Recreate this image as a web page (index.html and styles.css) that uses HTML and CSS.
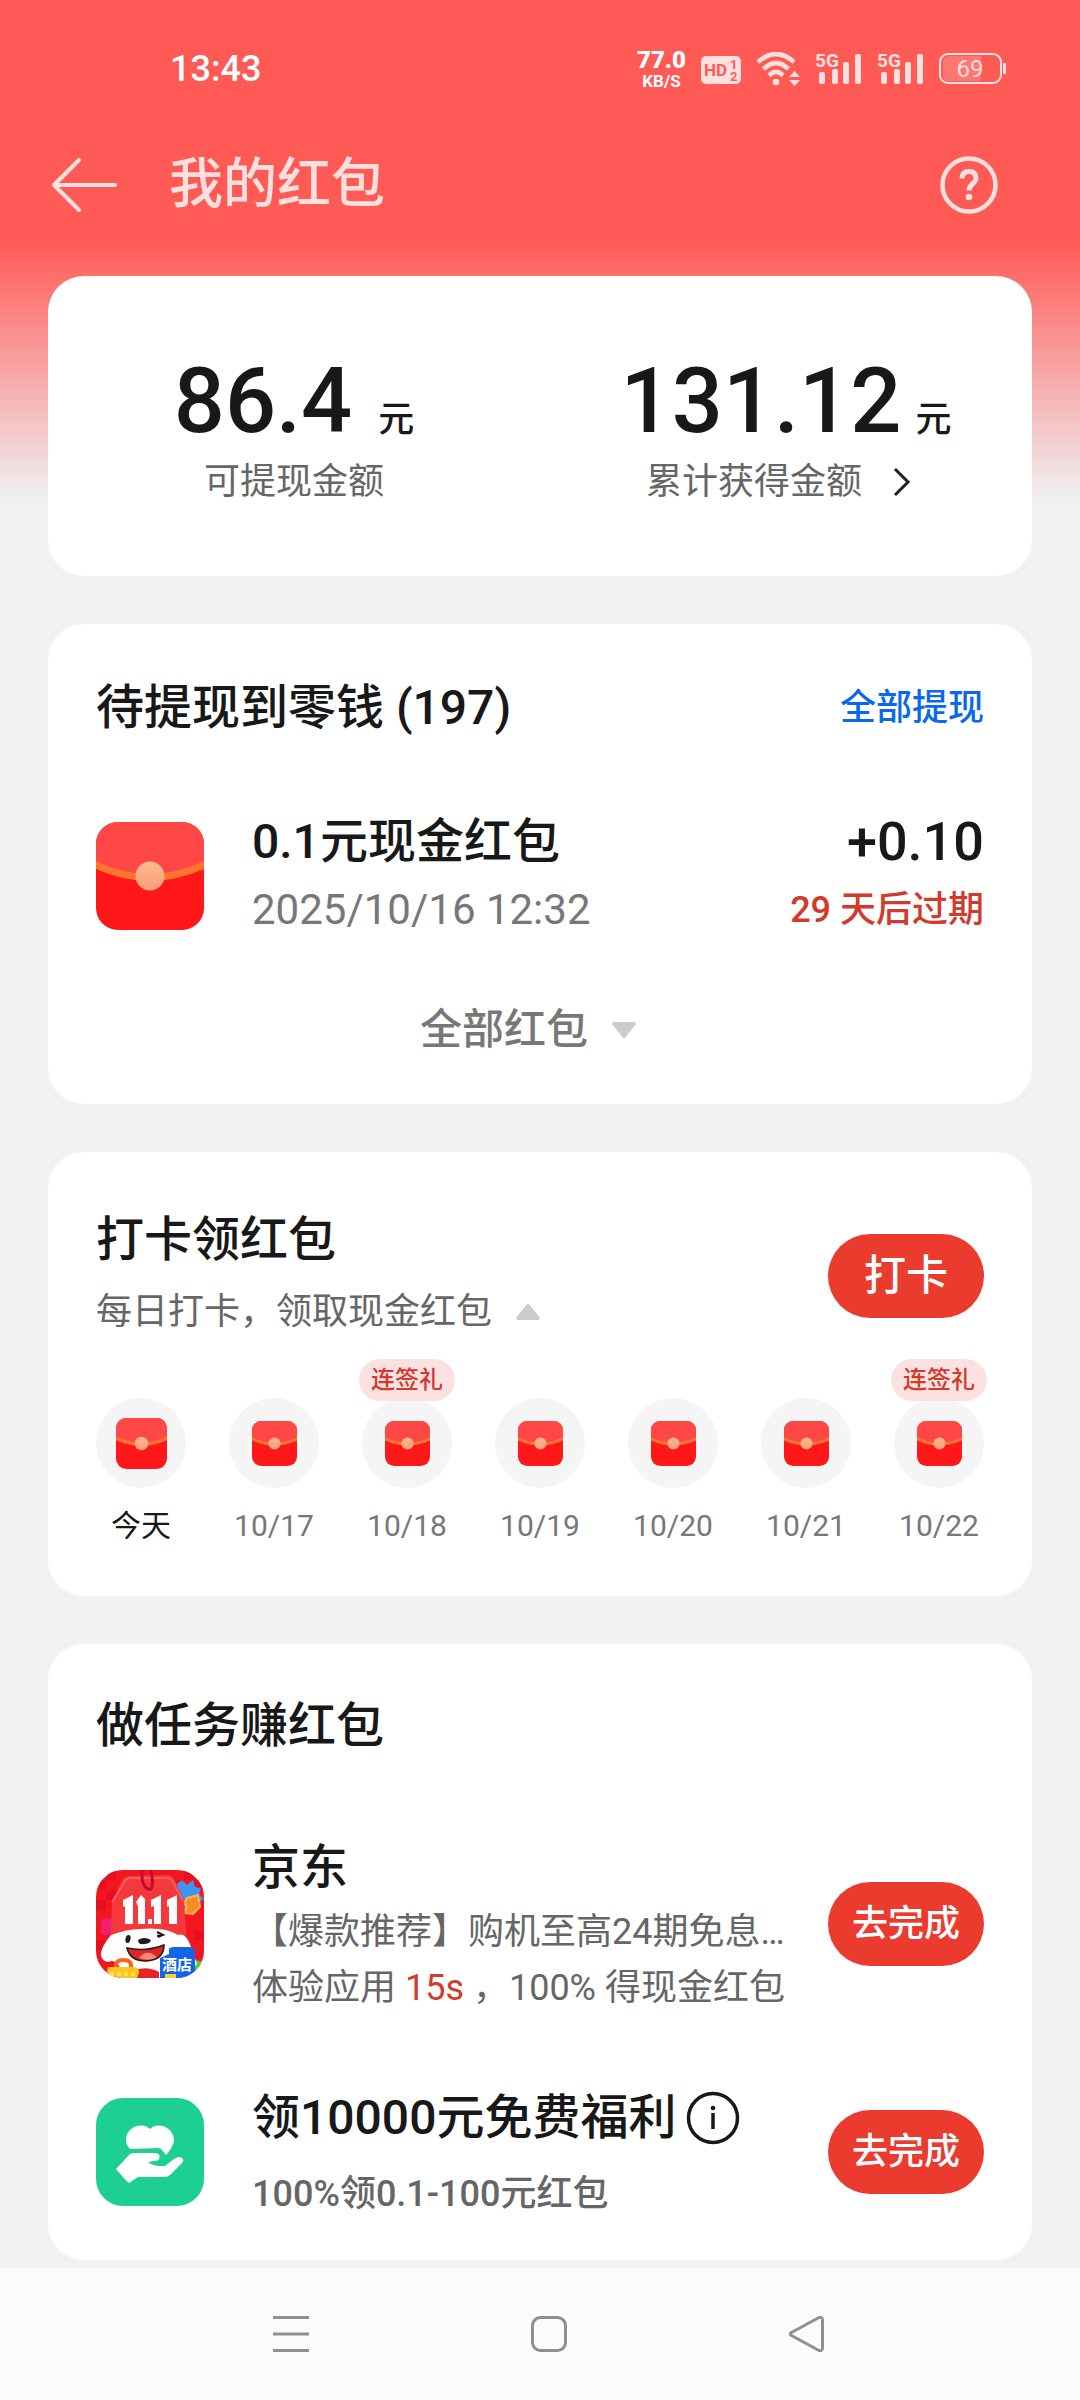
FILE: index.html
```html
<!DOCTYPE html>
<html lang="zh-CN">
<head>
<meta charset="utf-8">
<meta name="viewport" content="width=device-width, initial-scale=1">
<title>我的红包</title>
<link rel="stylesheet" href="styles.css">
</head>
<body>
<svg class="defs" width="0" height="0" aria-hidden="true">
  <defs>
    <clipPath id="tile"><rect width="108" height="108" rx="27"/></clipPath>
    <clipPath id="packetClip"><rect width="108" height="108" rx="22"/></clipPath>
    <linearGradient id="seal" x1="0" y1="0" x2="0" y2="1"><stop offset="0" stop-color="#ffb98c"/><stop offset="1" stop-color="#f89d7c"/></linearGradient>
    <symbol id="packet" viewBox="0 0 108 108">
      <g clip-path="url(#packetClip)">
        <rect width="108" height="108" fill="#ff171a"/>
        <path d="M0 0H108V47Q54 71 0 47Z" fill="#ff7530"/>
        <path d="M0 0H108V39Q54 65 0 39Z" fill="#ff4846"/>
        <circle cx="54" cy="54" r="14.5" fill="url(#seal)"/>
      </g>
    </symbol>
    <symbol id="signal" viewBox="0 0 47 34">
      <text x="0" y="15" font-size="19" font-weight="700">5G</text>
      <rect x="4" y="20" width="6" height="12" rx="2"/>
      <rect x="17" y="17" width="6" height="15" rx="2"/>
      <rect x="28" y="10" width="6" height="22" rx="2"/>
      <rect x="40" y="2" width="6" height="30" rx="2"/>
    </symbol>
  </defs>
</svg>
<div class="page">
  <div class="status">
    <time class="clock">13:43</time>
    <div class="indicators">
      <div class="speed"><b>77.0</b><span>KB/S</span></div>
      <svg width="40" height="34" viewBox="0 0 40 34">
        <rect y="4" width="40" height="28" rx="5"/>
        <g class="cut" font-weight="700"><text x="3" y="24" font-size="17">HD</text>
        <text x="29" y="17" font-size="13">1</text><text x="29" y="29" font-size="13">2</text></g>
      </svg>
      <svg width="44" height="34" viewBox="0 0 44 34">
        <g fill="none" stroke="#ffe0dd" stroke-width="4.6">
          <path d="M2 10Q20 -6 38 10"/><path d="M7.500 17Q20 5 32.500 17"/><path d="M13 23.500Q20 16.500 27 23.500"/>
        </g>
        <circle cx="20" cy="30" r="3.300"/>
        <path d="M38.500 19l5.500 6H33zM38.500 34l-5.500-6h11z"/>
      </svg>
      <svg width="47" height="34"><use href="#signal"/></svg>
      <svg width="47" height="34"><use href="#signal"/></svg>
      <svg width="67" height="34" viewBox="0 0 67 34">
        <path d="M10 4H42V29H10Q4 29 4 23V10Q4 4 10 4Z" fill="#ff7672"/>
        <rect x="1" y="2" width="61" height="29" rx="8" fill="none" stroke="#ffe0dd" stroke-width="2"/>
        <rect x="64" y="11" width="3" height="11" rx="1"/>
        <text x="31" y="25" font-size="24" text-anchor="middle">69</text>
      </svg>
    </div>
  </div>
  <header class="bar">
    <button class="icon-button" aria-label="返回">
      <svg width="66" height="54" viewBox="0 0 66 54" fill="none" stroke="#ffe0dd" stroke-width="4"><path d="M27 2L2 27L27 52M2 27H63" stroke-linecap="round" stroke-linejoin="round"/></svg>
    </button>
    <h1>我的红包</h1>
    <button class="icon-button" aria-label="帮助">
      <svg width="58" height="58" viewBox="0 0 58 58" fill="none" stroke="#ffe0dd"><circle cx="29" cy="29" r="26.500" stroke-width="4.500"/><path d="M22 22.500Q22 15.500 29 15.500T36 22.500C36 27 29 28 29 34.500" stroke-width="5"/><circle cx="29" cy="41" r="3.300" fill="#ffe0dd" stroke="none"/></svg>
    </button>
  </header>

  <main>
    <section class="card summary">
      <div class="stat">
        <p class="amount"><strong>86.4</strong><span>元</span></p>
        <p class="note">可提现金额</p>
      </div>
      <a class="stat stat-total" href="#total">
        <p class="amount"><strong>131.12</strong><span>元</span></p>
        <p class="note">累计获得金额<svg width="48" height="48" viewBox="0 0 48 48" fill="none" stroke="#222" stroke-width="3"><path d="M17 11L30 24L17 37"/></svg></p>
      </a>
    </section>

    <section class="card pending">
      <div class="head"><h2>待提现到零钱 (197)</h2><a class="link" href="#withdraw">全部提现</a></div>
      <div class="entry">
        <svg width="108" height="108"><use href="#packet"/></svg>
        <div class="info"><h3>0.1元现金红包</h3><time class="date">2025/10/16 12:32</time></div>
        <div class="gain"><strong>+0.10</strong><span>29 天后过期</span></div>
      </div>
      <button class="more">全部红包<svg width="48" height="48" viewBox="0 0 48 48" fill="#ccc"><path d="M13 16H35L36 18L25 32H23L12 18Z"/></svg></button>
    </section>

    <section class="card checkin">
      <div class="head">
        <div><h2>打卡领红包</h2><p class="note">每日打卡，领取现金红包<svg width="48" height="48" viewBox="0 0 48 48" fill="#ccc"><path d="M13 32H35L36 30L25 16H23L12 30Z"/></svg></p></div>
        <button class="pill pill-large">打卡</button>
      </div>
      <ol class="days">
        <li class="today"><div class="dot"><svg width="51" height="51"><use href="#packet"/></svg></div><span>今天</span></li>
        <li><div class="dot"><svg width="45" height="45"><use href="#packet"/></svg></div><span>10/17</span></li>
        <li><div class="dot"><svg width="45" height="45"><use href="#packet"/></svg><em>连签礼</em></div><span>10/18</span></li>
        <li><div class="dot"><svg width="45" height="45"><use href="#packet"/></svg></div><span>10/19</span></li>
        <li><div class="dot"><svg width="45" height="45"><use href="#packet"/></svg></div><span>10/20</span></li>
        <li><div class="dot"><svg width="45" height="45"><use href="#packet"/></svg></div><span>10/21</span></li>
        <li><div class="dot"><svg width="45" height="45"><use href="#packet"/></svg><em>连签礼</em></div><span>10/22</span></li>
      </ol>
    </section>

    <section class="card tasks">
      <h2>做任务赚红包</h2>
      <div class="task">
        <svg width="108" height="108" viewBox="0 0 108 108">
          <g clip-path="url(#tile)">
            <rect width="108" height="108" fill="#f4161f"/>
            <path d="M0 10H10V20H0ZM10 0H20V10H10ZM10 20H20V30H10ZM0 30H10V40H0ZM88 0H98V10H88ZM78 10H88V20H78ZM98 10H108V20H98ZM0 70H10V80H0ZM98 60H108V70H98Z" fill="#e60f20"/>
            <path d="M100 90Q104 92 108 90V108H96Z" fill="#55c936"/>
            <path d="M86 10l5 5 6-5 2 7 6 1-2 6 5 5-6 4-1 7-8-1-8 3-6-8-4-9 5-4 1-7z" fill="#3d95f3"/>
            <path d="M91 28l11-3 2 12-7 7-9-1 3-7-3-2z" fill="#ff8b22" stroke="#ffb255" stroke-width="2"/>
            <path d="M5 53Q6 47 12 48L19 47V64L8 65Q2 63 6 59Z" fill="#f0206d"/>
            <path d="M27 9Q29 6 33 6L72 5Q76 5 78 9L88 30L91 78L15 67L16 32Z" fill="#f5383c"/>
            <path d="M16 32L29 11Q31 8 35 8H70Q75 8 77 12L87 31" fill="none" stroke="#ff6a67" stroke-width="1.500"/>
            <path d="M46 0Q45 16 52 19T55 0" fill="none" stroke="#c90636" stroke-width="3"/>
            <g fill="#fff"><path d="M27 30L37 25V54H29V36L27 37ZM40 32L45 25L49 29V54H42V36ZM52 49H56V54H52ZM55 30L65 25V54H58V36L55 37ZM71 30L81 25V54H73V36L71 37Z"/></g>
            <path d="M15 65Q31 59 45 59Q69 57 82 65Q90 62 95 77L101 94Q97 99 90 94L84 89L83 108H25L24 98Q22 92 16 91Q8 94 5 86Q4 78 15 65Z" fill="#fff"/>
            <ellipse cx="32" cy="69" rx="2.500" ry="4" fill="#26191a" transform="rotate(12 32 69)"/>
            <path d="M42 70Q48 66 55 70Q54 74 48 74Q42 75 42 70Z" fill="#26191a"/>
            <path d="M61 62L67 65L62 67M67 65L61 66" fill="none" stroke="#26191a" stroke-width="2"/>
            <path d="M31 78Q49 82 68 75Q68 90 50 91Q34 91 31 78Z" fill="#df2428" stroke="#26191a" stroke-width="1.500"/>
            <path d="M43 88Q51 78 61 87Q53 92 43 88Z" fill="#ff8770"/>
            <path d="M36 101Q50 95 63 102V108H36Z" fill="#e92325"/>
            <path d="M20 98Q19 90 27 90Q36 90 35 97" fill="none" stroke="#ff621f" stroke-width="4"/>
            <path d="M12 97H38Q43 97 43 103L41 108H13L11 101Z" fill="#ffc623"/>
            <path d="M14 104H40" stroke="#ffdf59" stroke-width="4" stroke-dasharray="4 3"/>
            <path d="M73 79Q74 77 78 77H94Q99 78 99 82V108H64V88L73 84Z" fill="#1264e8"/>
            <text x="66" y="100" font-size="15" font-weight="700" fill="#fff">酒店</text>
            <rect x="69" y="104" width="11" height="4" fill="#ffcc39"/>
          </g>
        </svg>
        <div class="info"><h3>京东</h3><p class="note clip">【爆款推荐】购机至高24期免息…</p><p class="note">体验应用 <b>15s</b> ，100% 得现金红包</p></div>
        <button class="pill">去完成</button>
      </div>
      <div class="task task-bonus">
        <svg width="108" height="108" viewBox="0 0 108 108">
          <rect width="108" height="108" rx="27" fill="#1dd092"/>
          <path d="M34 51Q30 47 30 41C31 28 47 24 54 31C61 24 76 28 78 41Q78 48 70 57L66 52Q65 50 61 50Z" fill="#fff"/>
          <path d="M20 71L34 56Q36 55 39 55H60Q65 56 63 61Q62 63 58 63L52 64Q57 68 64 68H69L78 61Q84 57 87 61Q88 63 86 65L74 77Q72 79 68 79H42L33 85Q31 84 20 71Z" fill="#fff"/>
        </svg>
        <div class="info">
          <h3>领10000元免费福利<svg width="54" height="54" viewBox="0 0 54 54" fill="none" stroke="#181818"><circle cx="27" cy="27" r="24.500" stroke-width="3.500"/><path d="M27 22V38" stroke-width="3.500"/><circle cx="27" cy="17" r="2.300" fill="#181818" stroke="none"/></svg></h3>
          <p class="note">100%领0.1-100元红包</p>
        </div>
        <button class="pill">去完成</button>
      </div>
    </section>
  </main>

  <nav class="system">
    <button aria-label="最近任务"><svg width="36" height="36" viewBox="0 0 36 36"><path d="M0 1.500H36M0 18H36M0 34.500H36"/></svg></button>
    <button aria-label="主屏幕"><svg width="36" height="36" viewBox="0 0 36 36"><rect x="1.500" y="1.500" width="33" height="33" rx="8"/></svg></button>
    <button aria-label="后退"><svg width="36" height="36" viewBox="0 0 36 36"><path d="M2.500 16.500L29 2Q33.500 0 33.500 4V32Q33.500 36 29 34L2.500 19.500Q0 18 2.500 16.500Z"/></svg></button>
  </nav>
</div>
</body>
</html>
```
FILE: styles.css
```css
* { box-sizing: border-box; margin: 0; padding: 0; }

body {
  background: #f0f1f3;
  color: #181818;
  font-family: Roboto, "Noto Sans CJK SC", sans-serif;
}

svg { display: block; flex: none; }
.defs { position: absolute; }
a { color: inherit; text-decoration: none; }
button { border: 0; background: none; color: inherit; font: inherit; cursor: pointer; }

.page {
  display: flex;
  flex-direction: column;
  min-height: 100vh;
  background: linear-gradient(#ff5a56 240px, #f0f1f3 500px);
}

.status {
  display: flex;
  justify-content: space-between;
  align-items: center;
  height: 138px;
  padding: 0 74px 0 170px;
  color: #fff;
}
.clock { font-size: 36px; font-weight: 500; }
.indicators { display: flex; align-items: center; gap: 15px; fill: #ffe0dd; }
.speed { display: flex; flex-direction: column; align-items: center; font-weight: 700; }
.speed b { font-size: 24px; line-height: 24px; }
.speed span { font-size: 17px; line-height: 18px; }
.cut { fill: #ff5a56; }

.bar { display: flex; align-items: center; height: 94px; padding: 0 82px 0 52px; color: #ffe0dd; }
.bar h1 { flex: 1; margin-left: 51px; font-size: 54px; font-weight: 500; line-height: 72px; }

main { display: flex; flex-direction: column; gap: 48px; padding: 44px 48px 8px; }

.card { padding: 0 48px; border-radius: 36px; background: #fff; }
h2, h3 { font-size: 48px; font-weight: 500; }
h2 { line-height: 72px; }
.note { font-size: 36px; line-height: 48px; color: #666; }

.summary { display: grid; grid-template-columns: 1fr 1fr; padding: 78px 0 70px; }
.stat { display: flex; flex-direction: column; align-items: center; gap: 8px; }
.amount { display: flex; align-items: baseline; gap: 26px; font-weight: 500; }
.amount strong { font-size: 90px; line-height: 96px; font-weight: 500; }
.amount span { font-size: 36px; line-height: 48px; }
.stat-total .amount { gap: 14px; }
.stat-total .note { display: flex; align-items: center; gap: 16px; }

.head { display: flex; justify-content: space-between; align-items: center; }
.link { font-size: 36px; font-weight: 500; line-height: 48px; color: #0a68ee; }

.pending { display: flex; flex-direction: column; padding-top: 48px; padding-bottom: 44px; }
.entry { display: flex; align-items: center; gap: 48px; margin-top: 64px; line-height: 68px; }
.info { flex: 1; min-width: 0; }
.date { display: block; font-size: 42px; color: #777; }
.gain { display: flex; flex-direction: column; align-items: flex-end; }
.gain strong { font-size: 54px; font-weight: 500; }
.gain span { font-size: 36px; font-weight: 500; color: #d13a2c; }
.more {
  display: flex;
  align-items: center;
  align-self: center;
  gap: 12px;
  margin-top: 56px;
  padding-right: 12px;
  font-size: 42px;
  font-weight: 500;
  line-height: 60px;
  color: #777;
}

.checkin { padding-top: 52px; padding-bottom: 50px; }
.checkin .note { display: flex; align-items: center; gap: 12px; line-height: 72px; }
.pill {
  flex: none;
  width: 156px;
  height: 84px;
  border-radius: 42px;
  background: #eb3b2f;
  color: #fff;
  font-size: 36px;
  font-weight: 500;
  line-height: 48px;
}
.pill-large { font-size: 42px; }

.days { display: flex; justify-content: space-between; margin-top: 50px; list-style: none; }
.days li {
  display: flex;
  flex-direction: column;
  align-items: center;
  gap: 18px;
  width: 90px;
  font-size: 30px;
  line-height: 40px;
  color: #777;
}
.days .today { color: #181818; }
.dot {
  position: relative;
  display: grid;
  place-items: center;
  width: 90px;
  height: 90px;
  border-radius: 50%;
  background: #f5f5f5;
}
.dot em {
  position: absolute;
  top: -39px;
  left: -3px;
  width: 96px;
  border-radius: 21px;
  background: #fbe2e1;
  color: #d13a2c;
  font-size: 24px;
  font-style: normal;
  font-weight: 500;
  line-height: 42px;
  text-align: center;
}

.tasks { padding-top: 46px; padding-bottom: 38px; }
.task { display: flex; align-items: center; gap: 48px; margin-top: 70px; }
.task h3 { display: flex; align-items: center; gap: 10px; line-height: 72px; }
.task .note { line-height: 56px; white-space: nowrap; }
.task .pill { margin-left: -24px; }
.task .clip { overflow: hidden; }
.task b { font-weight: 400; color: #d13a2c; }
.task-bonus { margin-top: 66px; }
.task-bonus .note { margin-top: 12px; font-weight: 500; }

.system {
  display: flex;
  justify-content: center;
  align-items: center;
  gap: 222px;
  height: 132px;
  margin-top: auto;
  padding-left: 18px;
  background: #fbfbfb;
}
.system svg { fill: none; stroke: #8f8f8f; stroke-width: 3; }
```
